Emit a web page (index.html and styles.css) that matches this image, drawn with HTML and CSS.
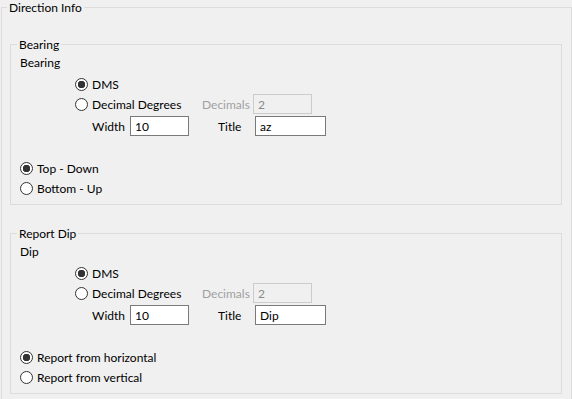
FILE: index.html
```html
<!DOCTYPE html>
<html lang="en">
  <head>
    <meta charset="utf-8" />
    <title>Direction Info</title>
    <link rel="stylesheet" href="styles.css">
  </head>
  <body>
    <fieldset class="group outer">
      <legend>Direction Info</legend>

      <fieldset class="group section">
        <legend>Bearing</legend>
        <div class="caption">Bearing</div>
        <div class="format">
          <label class="option"><input type="radio" name="b-fmt" checked>DMS</label>
          <div class="row">
            <label class="option wide"><input type="radio" name="b-fmt">Decimal Degrees</label>
            <span class="field-label decimals disabled">Decimals</span>
            <input class="text small" type="text" value="2" disabled>
          </div>
          <div class="row fields">
            <span class="field-label width-label">Width</span>
            <input class="text small" type="text" value="10">
            <span class="field-label title-label">Title</span>
            <input class="text title" type="text" value="az">
          </div>
        </div>
        <div class="direction">
          <label class="option"><input type="radio" name="b-dir" checked>Top - Down</label>
          <label class="option"><input type="radio" name="b-dir">Bottom - Up</label>
        </div>
      </fieldset>

      <fieldset class="group section">
        <legend>Report Dip</legend>
        <div class="caption">Dip</div>
        <div class="format">
          <label class="option"><input type="radio" name="d-fmt" checked>DMS</label>
          <div class="row">
            <label class="option wide"><input type="radio" name="d-fmt">Decimal Degrees</label>
            <span class="field-label decimals disabled">Decimals</span>
            <input class="text small" type="text" value="2" disabled>
          </div>
          <div class="row fields">
            <span class="field-label width-label">Width</span>
            <input class="text small" type="text" value="10">
            <span class="field-label title-label">Title</span>
            <input class="text title" type="text" value="Dip">
          </div>
        </div>
        <div class="direction">
          <label class="option"><input type="radio" name="d-dir" checked>Report from horizontal</label>
          <label class="option"><input type="radio" name="d-dir">Report from vertical</label>
        </div>
      </fieldset>
    </fieldset>
  </body>
</html>
```

FILE: styles.css
```css
/* Windows-style options dialog */
*,
*::before,
*::after {
  box-sizing: border-box;
}

body {
  background: #f0f0f0;
  color: #000;
  font-family: Lato, "Liberation Sans", sans-serif;
  font-size: 12px;
  margin: 0;
  padding: 0 0 0 1px;
}

.group {
  border: 1px solid #dcdcdc;
  margin: 0;
  min-width: 0;
}

.group legend {
  line-height: 15px;
  margin-left: -3px;
  padding: 0 2px;
}

.outer {
  padding: 0 9px 12px 8px;
}

.section {
  margin-top: 22px;
  padding: 0 8px 6px 9px;
}

.section + .section {
  margin-top: 21px;
}

.caption {
  line-height: 14px;
  margin-top: 4px;
}

.format {
  margin-top: 4px;
  padding-left: 55px;
}

.row {
  align-items: center;
  display: flex;
  height: 20px;
}

.fields {
  margin-top: 2px;
}

.option {
  align-items: center;
  display: flex;
  gap: 4px;
  height: 20px;
}

.option input {
  appearance: none;
  background: #fff;
  border: 1px solid #333;
  border-radius: 50%;
  flex: none;
  height: 13px;
  margin: 0;
  width: 13px;
}

.option input:checked {
  background: radial-gradient(circle, #333 0 3.5px, #fff 4px);
}

.wide {
  width: 127px;
}

.field-label {
  flex: none;
}

.decimals {
  width: 51px;
}

.disabled {
  color: #a0a0a0;
}

.width-label {
  padding-right: 5px;
  text-align: right;
  width: 55px;
}

.title-label {
  padding-left: 29px;
  width: 66px;
}

.text {
  background: #fff;
  border: 1px solid #7a7a7a;
  color: #000;
  font: inherit;
  height: 20px;
  margin: 0;
  padding: 0 4px;
}

.text:disabled {
  background: #f0f0f0;
  border-color: #cccccc;
  color: #8a8a8a;
}

.small {
  width: 59px;
}

.title {
  width: 71px;
}

.direction {
  margin-top: 22px;
}
```
